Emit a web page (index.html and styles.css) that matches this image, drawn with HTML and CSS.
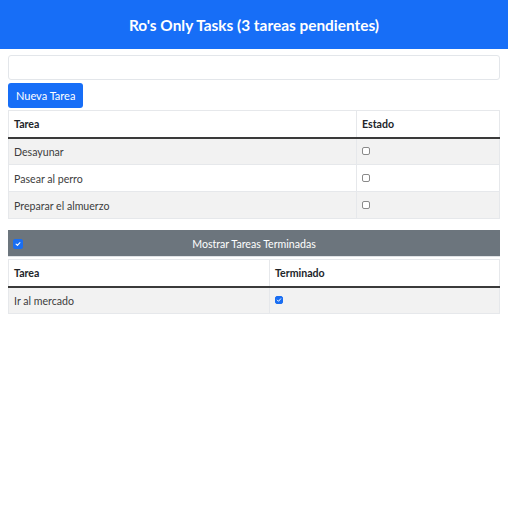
FILE: index.html
```html
<!DOCTYPE html>
<html lang="es">
<head>
<meta charset="utf-8">
<title>Ro's Only Tasks</title>
<link rel="stylesheet" href="styles.css">
</head>
<body>
<header class="banner">
  <h1 class="title">Ro's Only Tasks (3 tareas pendientes)</h1>
</header>
<main class="content">
  <input class="task-input" type="text">
  <div class="actions"><button class="btn-primary" type="button">Nueva Tarea</button></div>
  <table class="tasks tasks-pending">
    <thead>
      <tr><th class="col-name">Tarea</th><th>Estado</th></tr>
    </thead>
    <tbody>
      <tr><td>Desayunar</td><td><span class="cb"></span></td></tr>
      <tr><td>Pasear al perro</td><td><span class="cb"></span></td></tr>
      <tr><td>Preparar el almuerzo</td><td><span class="cb"></span></td></tr>
    </tbody>
  </table>
  <div class="toggle-bar">
    <span class="cb cb-checked cb-toggle"><svg viewBox="0 0 10 10" width="10" height="10"><path d="M2.6 5.2 L4.3 6.8 L7.4 3.4" fill="none" stroke="#fff" stroke-width="1.4" stroke-linecap="round" stroke-linejoin="round"/></svg></span>
    <span class="toggle-label">Mostrar Tareas Terminadas</span>
  </div>
  <table class="tasks tasks-done">
    <thead>
      <tr><th class="col-name2">Tarea</th><th>Terminado</th></tr>
    </thead>
    <tbody>
      <tr><td>Ir al mercado</td><td><span class="cb cb-checked"><svg viewBox="0 0 10 10" width="8" height="8"><path d="M2.2 5.2 L4.2 7.2 L7.8 3" fill="none" stroke="#fff" stroke-width="1.6" stroke-linecap="round" stroke-linejoin="round"/></svg></span></td></tr>
    </tbody>
  </table>
</main>
</body>
</html>
```
FILE: styles.css
```css
* { box-sizing: border-box; }
html, body { margin: 0; padding: 0; background: #fff; }
body {
  font-family: Lato, "Noto Sans", sans-serif;
  color: #212529;
  font-size: 10.6px;
}
.banner {
  background: #176ef7;
  height: 49px;
  display: flex;
  align-items: center;
  justify-content: center;
}
.title {
  margin: 0;
  color: #fff;
  font-size: 15.4px;
  font-weight: 700;
}
.content {
  padding: 6px 8px 0;
  display: flex;
  flex-direction: column;
}
.task-input {
  display: block;
  width: 100%;
  height: 25px;
  border: 1px solid #e3e6ea;
  border-radius: 3px;
  background: #fff;
}
.actions { margin-top: 3px; }
.btn-primary {
  background: #176ef7;
  color: #fff;
  border: none;
  border-radius: 3px;
  height: 25px;
  padding: 0 8px;
  font-family: inherit;
  font-size: 11px;
}
.tasks {
  width: 100%;
  border-collapse: collapse;
  margin-top: 2px;
}
.tasks th, .tasks td {
  border: 1px solid #e6e8eb;
  text-align: left;
  padding: 1px 5px 0;
  height: 27px;
  vertical-align: middle;
}
.tasks th { font-weight: 700; }
.tasks thead th { border-bottom: 2px solid #3a3a3a; padding-top: 0; }
.tasks tbody tr:nth-child(odd) td { background: #f2f2f2; }
.tasks tbody td { color: #3d3d3d; }
.col-name { width: 348px; }
.col-name2 { width: 261px; }
.tasks-pending { margin-bottom: 11px; }
.cb {
  display: inline-block;
  width: 8px;
  height: 8px;
  border: 1px solid #8a8a8a;
  border-radius: 2px;
  background: #fff;
  vertical-align: middle;
  position: relative;
  top: -2px;
}
.cb-checked {
  background: #1a6ef2;
  border-color: #1a6ef2;
  display: inline-flex;
  align-items: center;
  justify-content: center;
}
.cb-toggle {
  width: 10px;
  height: 10px;
  top: 0;
}
.toggle-bar {
  background: #6c757d;
  height: 27px;
  display: flex;
  align-items: center;
  padding: 1px 5px 0;
  color: #fff;
  border-bottom: 1px solid #dfe2e5;
}
.toggle-label {
  flex: 1;
  text-align: center;
  padding-right: 10px;
}
```
